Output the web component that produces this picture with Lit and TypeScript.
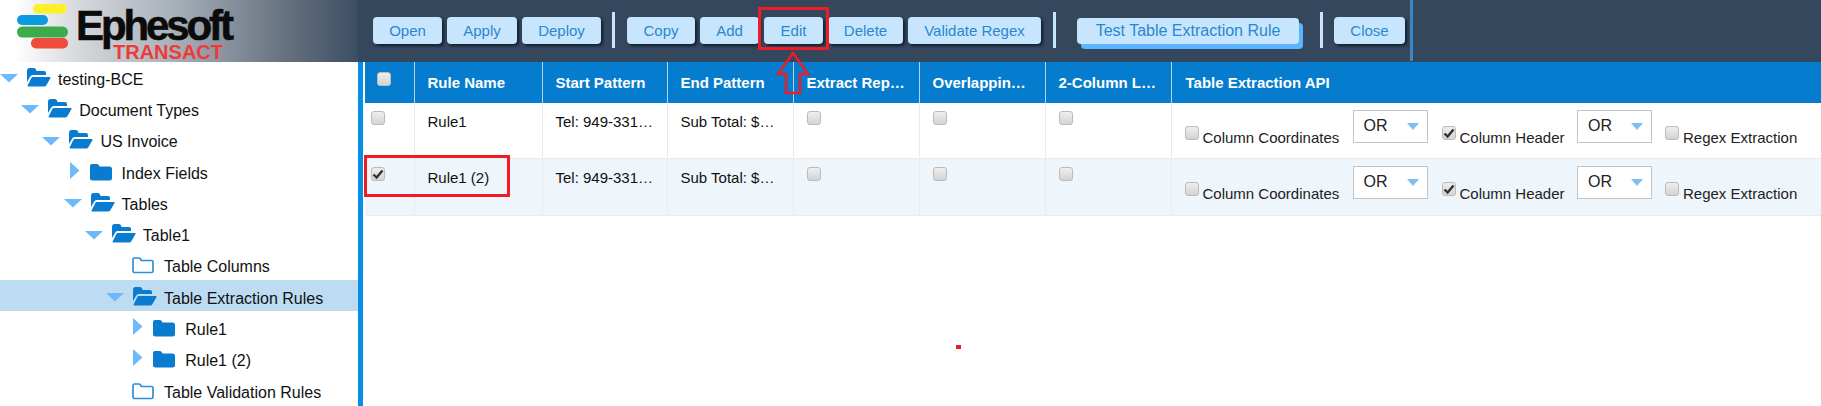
import { LitElement, html, css, svg } from "lit";
import { customElement } from "lit/decorators.js";

const triDown = html`<svg class="tw" width="18" height="9" viewBox="0 0 18 9"><path d="M0 0H18L9 8.5Z" fill="#6cb9fb"/></svg>`;
const triRight = html`<svg class="tw tr" width="10" height="17" viewBox="0 0 10 17"><path d="M0 0L9.5 8.5L0 17Z" fill="#6cb9fb"/></svg>`;
const folderOpen = html`<svg class="fo op" width="25" height="21" viewBox="0 0 25 21"><path d="M1 4Q1 1 3.5 1H8Q9.5 1 10 2.5L10.5 4H18Q20 4 20 6V8H6.5Q5 8 4.3 9.5L1 15Z" fill="#0a7ccf"/><path d="M6.8 10H24Q25 10 24.4 11.2L20.5 18Q19.8 19.5 18 19.5H2.5Q1 19.5 1.7 18.2L5.2 11.2Q5.8 10 6.8 10Z" fill="#0a7ccf"/></svg>`;
const folderClosed = html`<svg class="fo" width="22" height="18" viewBox="0 0 22 18"><path d="M0 3Q0 1 2 1H7Q8.5 1 9 2.5L9.5 3.5H19.5Q22 3.5 22 6V15Q22 17.5 19.5 17.5H2.5Q0 17.5 0 15Z" fill="#0a7ccf"/></svg>`;
const folderHollow = html`<svg class="fo" width="22" height="18" viewBox="0 0 22 18"><path d="M1 3.5Q1 2 2.5 2H7Q8 2 8.5 3L9.3 4.5H19.5Q21 4.5 21 6V15Q21 16.5 19.5 16.5H2.5Q1 16.5 1 15Z" fill="none" stroke="#2c90d8" stroke-width="1.7"/></svg>`;

type Node = { label: string; level: number; kind: "open" | "closed" | "hollow"; selected?: boolean };
const nodes: Node[] = [
  { label: "testing-BCE", level: 0, kind: "open" },
  { label: "Document Types", level: 1, kind: "open" },
  { label: "US Invoice", level: 2, kind: "open" },
  { label: "Index Fields", level: 3, kind: "closed" },
  { label: "Tables", level: 3, kind: "open" },
  { label: "Table1", level: 4, kind: "open" },
  { label: "Table Columns", level: 5, kind: "hollow" },
  { label: "Table Extraction Rules", level: 5, kind: "open", selected: true },
  { label: "Rule1", level: 6, kind: "closed" },
  { label: "Rule1 (2)", level: 6, kind: "closed" },
  { label: "Table Validation Rules", level: 5, kind: "hollow" },
];

const check = svg`<path d="M2.5 7.5L5.6 10.5L11.5 3.5" fill="none" stroke="#333" stroke-width="2.4"/>`;
const box = (checked = false) => html`<span class="cb">${checked ? html`<svg width="14" height="14" viewBox="0 0 14 14">${check}</svg>` : ""}</span>`;
const select = () => html`<span class="sel">OR<svg width="12" height="8" viewBox="0 0 12 8"><path d="M0 0H12L6 7Z" fill="#7dbdf0"/></svg></span>`;

@customElement("app-root")
export class AppRoot extends LitElement {
  static styles = css`
    :host { display: block; width: 1821px; height: 406px; overflow: hidden; position: relative; background: #fff;
      font-family: "Liberation Sans", Arial, sans-serif; color: #111; }
    .top { display: flex; height: 62px; background: #34475d; }
    .logo { width: 358px; flex: none; display: flex; padding: 4px 0 0 17px; box-sizing: border-box;
      background: linear-gradient(90deg, #fff 4%, #d5d8dc 22%, #a9b1ba 48%, #66717f 80%, #3c4e64 100%); }
    .logo svg { flex: none; margin-right: 7px; }
    .brand { display: flex; flex-direction: column; padding-top: 2px; }
    .eph { font-size: 42px; font-weight: 700; letter-spacing: -3.1px; line-height: 40px; color: #0b0b0b; height: 39px; -webkit-text-stroke: .6px #0b0b0b; }
    .tra { font-size: 20px; font-weight: 700; line-height: 14px; color: #ee3a38; margin-left: 37px; }
    .bar { flex: 1; display: flex; align-items: flex-start; padding: 17px 0 0 15px; box-sizing: border-box; height: 61px; }
    .btn { flex: none; white-space: nowrap; height: 27px; box-sizing: border-box; display: flex; align-items: center; justify-content: center;
      margin-right: 5px; font-size: 15px; color: #2a86cf; background: #c7e6fd; border-radius: 4px; box-shadow: 2px 2px 3px #10202f; }
    .btn.test { box-shadow: 4px 5px 0 #5cb3ff; margin-top: 1px; height: 26px; font-size: 16px; }
    .sep { width: 3px; height: 36px; margin-top: -5px; background: #c7e6fd; flex: none; }
    .end { width: 3px; align-self: stretch; background: #3d86c6; margin-top: -17px; flex: none; }
    .main { display: flex; height: 344px; }
    .tree { width: 358px; flex: none; box-sizing: border-box; font-size: 16px; margin-top: -1px; }
    .row { height: 31.3px; display: flex; align-items: center; box-sizing: border-box; padding-top: 6px; }
    .row.sel-row { background: #bddcf2; }
    .twc { width: 26px; flex: none; display: flex; align-items: center; }
    .tw { margin-top: -2px; }
    .tw.tr { margin-left: 6px; margin-top: -7px; }
    .fo { flex: none; margin-top: -4px; }
    .fo.op { margin-top: -5px; }
    .lbl { white-space: nowrap; }
    .rail { width: 5px; flex: none; background: #068fe8; }
    .content { flex: 1; padding-left: 2px; min-width: 0; }
    table { border-collapse: collapse; table-layout: fixed; width: 1456px; font-size: 15px; }
    th { height: 41px; background: #057cce; color: #fff; font-weight: 700; text-align: left; padding: 0 0 0 13px;
      border-left: 1px solid #b6d3e8; box-sizing: border-box; white-space: nowrap; overflow: hidden; }
    th:first-child { border-left: 0; padding: 0 0 5px 12px; }
    th:last-child { padding-left: 14px; }
    td { border: 1px solid #e8ecef; border-width: 0 0 1px 1px; padding: 8px 0 0 13px; vertical-align: top; box-sizing: border-box; white-space: nowrap; height: 55px; line-height: 22px; }
    td:first-child { border-left: 0; padding-left: 6px; }
    tr.alt td { background: #eef5fb; height: 57px; }
    .cb { display: inline-flex; width: 14px; height: 14px; box-sizing: border-box; border: 1px solid #bbb; border-radius: 3px;
      background: linear-gradient(#eee, #d4d4d4); vertical-align: top; overflow: hidden; align-items: center; justify-content: center; }
    .cb svg { flex: none; }
    .api { display: flex; align-items: flex-start; height: 46px; margin-top: -1px; }
    .opt { display: flex; align-items: flex-start; padding-top: 16px; flex: none; box-sizing: border-box; }
    .opt .cb { margin-right: 4px; }
    .opt .t { line-height: 17px; margin-top: 3px; color: #222; }
    .o1 { width: 168px; }
    .o2 { width: 149.5px; padding-left: 14px; }
    .o3 { padding-left: 13px; }
    .sel { flex: none; width: 75px; height: 33px; box-sizing: border-box; border: 1px solid #c4c4c4; background: #fff; display: flex; justify-content: space-between;
      padding: 5px 8px 0 10px; font-size: 16px; line-height: 20px; color: #222; }
    .sel svg { margin-top: 7px; }
    .mark { position: absolute; border: 3px solid #ee1c25; box-sizing: border-box; }
    .edit { left: 758px; top: 7px; width: 71px; height: 43px; }
    .rn { left: 364px; top: 155px; width: 146px; height: 42px; }
    .arrow { position: absolute; left: 775px; top: 51px; }
    .dot { position: absolute; left: 956px; top: 345px; width: 5px; height: 4px; background: #ee1c25; }
    .w-open { width: 69px; } .w-apply { width: 70px; } .w-deploy { width: 79px; margin-right: 11px; }
    .w-copy { width: 68px; margin-left: 12px; } .w-add { width: 59px; } .w-edit { width: 59px; }
    .w-del { width: 75px; } .w-val { width: 133px; margin-right: 12px; }
    .w-test { width: 222px; margin-left: 21px; margin-right: 21px; }
    .w-close { width: 71px; margin-left: 11px; }
    .c0 { width: 49px; } .c1 { width: 128px; } .c2 { width: 125px; } .c3 { width: 126px; }
  `;

  private renderNode(n: Node) {
    const icon = n.kind === "open" ? folderOpen : n.kind === "closed" ? folderClosed : folderHollow;
    const tw = n.kind === "open" ? triDown : n.kind === "closed" ? triRight : "";
    return html`<div class="row ${n.selected ? "sel-row" : ""}" style="padding-left:${n.level * 21.2}px">
      <span class="twc">${tw}</span>${icon}<span class="lbl" style="margin-left:${n.kind === "open" ? 7 : 10}px">${n.label}</span>
    </div>`;
  }

  private renderRow(name: string, checked: boolean, alt: boolean) {
    return html`<tr class=${alt ? "alt" : ""}>
      <td>${box(checked)}</td>
      <td>${name}</td>
      <td>Tel: 949-331…</td>
      <td>Sub Total: $…</td>
      <td>${box()}</td>
      <td>${box()}</td>
      <td>${box()}</td>
      <td>
        <div class="api">
          <div class="opt o1">${box()}<span class="t">Column Coordinates</span></div>
          ${select()}
          <div class="opt o2">${box(true)}<span class="t">Column Header</span></div>
          ${select()}
          <div class="opt o3">${box()}<span class="t">Regex Extraction</span></div>
        </div>
      </td>
    </tr>`;
  }

  render() {
    return html`
      <div class="top">
        <div class="logo">
          <svg width="52" height="46" viewBox="0 0 52 46">
            <rect x="16" y="0" width="34" height="9.5" rx="4.7" fill="#fdf02a"/>
            <rect x="0" y="11" width="31" height="10" rx="5" fill="#0e9ade"/>
            <rect x="0" y="22.5" width="51" height="11" rx="5.5" fill="#3cab4a"/>
            <rect x="14" y="34" width="37" height="10.5" rx="5" fill="#ee4b3a"/>
          </svg>
          <div class="brand"><span class="eph">Ephesoft</span><span class="tra">TRANSACT</span></div>
        </div>
        <div class="bar">
          <span class="btn w-open">Open</span>
          <span class="btn w-apply">Apply</span>
          <span class="btn w-deploy">Deploy</span>
          <span class="sep"></span>
          <span class="btn w-copy">Copy</span>
          <span class="btn w-add">Add</span>
          <span class="btn w-edit">Edit</span>
          <span class="btn w-del">Delete</span>
          <span class="btn w-val">Validate Regex</span>
          <span class="sep"></span>
          <span class="btn test w-test">Test Table Extraction Rule</span>
          <span class="sep"></span>
          <span class="btn w-close">Close</span>
          <span class="end"></span>
        </div>
      </div>
      <div class="main">
        <div class="tree">${nodes.map((n) => this.renderNode(n))}</div>
        <div class="rail"></div>
        <div class="content">
          <table>
            <colgroup>
              <col class="c0"/><col class="c1"/><col class="c2"/><col class="c3"/>
              <col class="c3"/><col class="c3"/><col class="c3"/><col/>
            </colgroup>
            <thead><tr>
              <th>${box()}</th><th>Rule Name</th><th>Start Pattern</th><th>End Pattern</th>
              <th>Extract Rep…</th><th>Overlappin…</th><th>2-Column L…</th><th>Table Extraction API</th>
            </tr></thead>
            <tbody>
              ${this.renderRow("Rule1", false, false)}
              ${this.renderRow("Rule1 (2)", true, true)}
            </tbody>
          </table>
        </div>
      </div>
      <div class="mark edit"></div>
      <div class="mark rn"></div>
      <svg class="arrow" width="36" height="44" viewBox="0 0 36 44"><path d="M18 2L33 23H25V42H11V23H3Z" fill="none" stroke="#ee1c25" stroke-width="2.5"/></svg>
      <div class="dot"></div>
    `;
  }
}
